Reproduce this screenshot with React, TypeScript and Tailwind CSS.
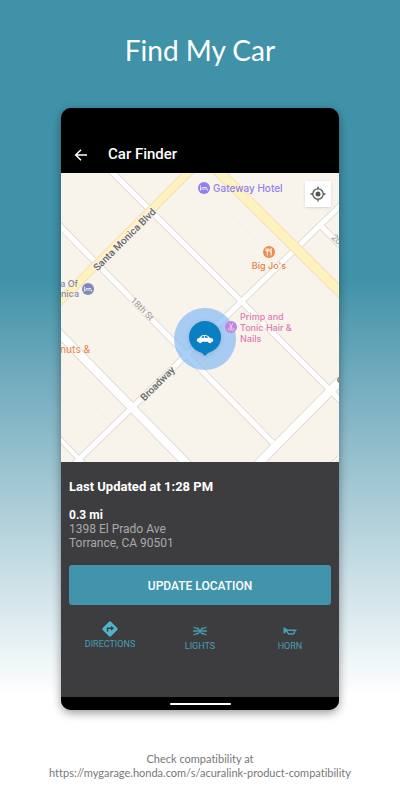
import React from "react";

const whiteRoads = [
  { d: "M108 168 L343 403", w: 5 },
  { d: "M57 223 L273 443", w: 5 },
  { d: "M57 436 L84 464", w: 4 },
  { d: "M72 466 L343 203", w: 5 },
  { d: "M319 224 L343 248", w: 5 },
  { d: "M326 468 L343 454", w: 2 },
  { d: "M56 330 L190 467", w: 8 },
  { d: "M254 468 L343 378", w: 8 },
];

const yellowRoads = [
  { d: "M193 168 L57 304", w: 7 },
  { d: "M214 167 L343 295", w: 9 },
];

function CarShape() {
  return (
    <path
      fillRule="evenodd"
      d="M-8 2.5 C-8.6 .2 -7.6 -1 -5.6 -1.3 C-4 -3.4 -2.8 -4 -.5 -4 C2.2 -4 3.4 -3 4.8 -1.2 C7.6 -.9 8.6 .2 8.2 2.4 L6.7 2.8 A2 2 0 0 1 2.9 2.8 L-2.8 2.8 A2 2 0 0 1 -6.6 2.8 Z M-4 -1.3 L-1 -1.3 L-1 -3.1 C-2.6 -3.1 -3.2 -2.5 -4 -1.3 Z M-.2 -1.3 L3.4 -1.3 C2.4 -2.7 1.6 -3.1 -.2 -3.1 Z"
      fill="#fff"
    />
  );
}

function BedShape() {
  return <path d="M-3.5 -2.5 V2.5 M-3.5 1 H3.5 V2.5 M-2 -.5 H3" stroke="#fff" strokeOpacity=".75" strokeWidth="1" fill="none" />;
}

function CarMap() {
  return (
    <svg viewBox="61 173 278 289" className="block w-full h-auto bg-[#f8f4ec]" role="img" aria-label="Car location map">
      {/* Parcel lines */}
      <g stroke="#f4efe7" strokeWidth="1">
        <path d="M130 248 L200 318 M180 200 L262 280 M76 290 L140 354 M240 345 L300 405 M66 380 L118 430 M215 200 L256 240 M160 420 L200 460 M215 412 L258 455" />
      </g>

      {/* Streets */}
      <g fill="none" stroke="#e0dcd7">
        {whiteRoads.map((r) => (
          <path key={r.d} d={r.d} strokeWidth={r.w + 2} />
        ))}
      </g>
      <g fill="none" stroke="#fff">
        {whiteRoads.map((r) => (
          <path key={r.d} d={r.d} strokeWidth={r.w} />
        ))}
      </g>
      <g fill="none" stroke="#f7dfb0">
        {yellowRoads.map((r) => (
          <path key={r.d} d={r.d} strokeWidth={r.w + 2} />
        ))}
      </g>
      <g fill="none" stroke="#fef3c0">
        {yellowRoads.map((r) => (
          <path key={r.d} d={r.d} strokeWidth={r.w} />
        ))}
      </g>

      {/* Street names */}
      <g className="font-['Roboto',sans-serif] text-[10px] font-medium" textAnchor="middle" stroke="#f8f4ec" strokeWidth="2" paintOrder="stroke">
        <text transform="translate(127 242) rotate(-45)" fill="#66666a">Santa Monica Blvd</text>
        <text transform="translate(160 386) rotate(-45)" fill="#66666a">Broadway</text>
        <text transform="translate(140 311) rotate(45)" className="text-[9px] font-normal" fill="#97979a">18th St</text>
        <text transform="translate(341 248) rotate(45)" className="text-[9px] font-normal" fill="#97979a">20th St</text>
        <text transform="translate(355 371) rotate(-45)" fill="#66666a">Colorado</text>
      </g>

      {/* Location halo */}
      <circle cx="205" cy="339" r="31" fill="#7db7f5" fillOpacity=".65" />

      {/* Places */}
      <g className="font-['Inter',sans-serif] text-[9px] font-medium">
        <g transform="translate(204 188)">
          <circle r="6" fill="#9180ee" />
          <BedShape />
        </g>
        <text x="213" y="192" className="text-[10px]" fill="#9180ee">Gateway Hotel</text>

        <circle cx="269" cy="252" r="6" fill="#f08c4b" />
        <path d="M266 248.5 V251 H268.6 V248.5 M267.3 248.5 V255.5 M271.2 255.5 V248.5 C270 249 269.8 250.5 270 252 H271.2" stroke="#fff" strokeWidth="1" fill="none" />
        <text x="269" y="269" textAnchor="middle" fill="#e5824b">Big Jo&apos;s</text>

        <circle cx="231" cy="327" r="6" fill="#c183dc" />
        <path d="M229.5 323 L231.5 328 M233 323 L230.5 328" stroke="#fff" strokeWidth=".8" opacity=".7" />
        <circle cx="229.5" cy="329.3" r="1.3" fill="none" stroke="#fff" strokeWidth=".7" opacity=".7" />
        <circle cx="232.7" cy="329.3" r="1.3" fill="none" stroke="#fff" strokeWidth=".7" opacity=".7" />
        <g fill="#dd7ab5" stroke="#f8f4ec" strokeWidth="2" paintOrder="stroke">
          <text x="240" y="320">Primp and</text>
          <text x="240" y="331">Tonic Hair &amp;</text>
          <text x="240" y="342">Nails</text>
        </g>

        <g transform="translate(88 289)">
          <circle r="6" fill="#8189b8" />
          <BedShape />
        </g>
        <g fill="#8189b0" textAnchor="end">
          <text x="78" y="287">Casa Of</text>
          <text x="79" y="297">Monica</text>
        </g>
        <text x="90" y="353" className="text-[10px]" textAnchor="end" fill="#e5905c">Donuts &amp;</text>
      </g>

      {/* Car marker */}
      <g className="drop-shadow-sm">
        <circle cx="205" cy="337" r="16" fill="#0a80c4" />
        <path d="M199 350 L205 356 L211 350 Z" fill="#0a80c4" />
        <g transform="translate(205 339)">
          <CarShape />
        </g>
      </g>
    </svg>
  );
}

function DirectionsIcon() {
  return (
    <svg viewBox="0 0 16 16" className="size-4" aria-hidden="true">
      <path d="M8 .3 Q8.6 .3 9 .7 L15.3 7 Q16 8 15.3 9 L9 15.3 Q8 16 7 15.3 L.7 9 Q0 8 .7 7 L7 .7 Q7.4 .3 8 .3 Z" fill="#4fb3cd" />
      <path d="M5.5 10.5 V7.3 H9.5" fill="none" stroke="#3d3d3f" strokeWidth="1.5" />
      <path d="M9 4.8 L12 7.3 L9 9.8 Z" fill="#3d3d3f" />
    </svg>
  );
}

function LightsIcon() {
  return (
    <svg viewBox="0 0 16 10" className="w-4 h-2.5" fill="none" stroke="#469fb6" strokeWidth="1.3" aria-hidden="true">
      <path d="M5 1.6 Q10 5 5 8.4 M11 1.6 Q6 5 11 8.4 M5.4 3 L1.5 1 M6.5 5 H1 M5.4 7 L1.5 9 M10.6 3 L14.5 1 M9.5 5 H15 M10.6 7 L14.5 9" />
    </svg>
  );
}

function HornIcon() {
  return (
    <svg viewBox="0 0 16 10" className="w-4 h-2.5" aria-hidden="true">
      <path d="M1.5 1 L5.5 3.4 H14.5 V5 H5.5 L1.5 8 Z" fill="#469fb6" />
      <path d="M5 4.6 Q5.6 8 7.5 8 H10.4 Q12.6 8 12.8 4.6" fill="none" stroke="#469fb6" strokeWidth="1.3" />
    </svg>
  );
}

export default function App() {
  return (
    <main className="min-h-screen bg-white bg-linear-to-b from-[#4092a9] from-35% to-white to-87% font-['Roboto',sans-serif]">
      <h1 className="pt-8 text-center font-['Lato',sans-serif] text-[28px] leading-9 text-white">Find My Car</h1>

      {/* Phone */}
      <section className="mx-[61px] mt-10 overflow-hidden rounded-[10px] bg-[#3d3d3f] shadow-[0_3px_10px_rgba(0,0,0,0.4)]">
        <header className="flex h-[65px] items-center gap-[19px] bg-black px-3 pt-7 text-white">
          <button type="button" aria-label="Back" className="flex size-4 items-center justify-center">
            <svg viewBox="0 0 16 16" className="size-4" fill="none" stroke="#fff" strokeWidth="1.5" aria-hidden="true">
              <path d="M14 8 H3 M8 2.7 L2.7 8 L8 13.3" />
            </svg>
          </button>
          <h2 className="text-[15px] font-medium">Car Finder</h2>
        </header>

        <div className="relative">
          <CarMap />
          <button type="button" aria-label="Center on my location" className="absolute top-2 right-2 flex size-[26px] items-center justify-center bg-white shadow-sm">
            <svg viewBox="0 0 16 16" className="size-4" fill="none" stroke="#555" strokeWidth="1.3" aria-hidden="true">
              <circle cx="8" cy="8" r="5.2" />
              <circle cx="8" cy="8" r="2.5" fill="#555" stroke="none" />
              <path d="M8 .5 V3 M8 13 V15.5 M.5 8 H3 M13 8 H15.5" />
            </svg>
          </button>
        </div>

        <div className="px-2 pt-4">
          <h3 className="text-[13px] leading-[18px] font-bold text-white">Last Updated at 1:28 PM</h3>
          <p className="mt-3 text-xs leading-[14px] font-bold text-white">0.3 mi</p>
          <address className="text-xs leading-[14px] text-[#a9a9ab] not-italic">
            1398 El Prado Ave
            <br />
            Torrance, CA 90501
          </address>
          <button type="button" className="mt-[15px] h-10 w-full rounded-[3px] bg-[#4294ac] pt-0.5 text-xs font-medium text-white">
            UPDATE LOCATION
          </button>
        </div>

        <div className="grid h-[92px] grid-cols-3 items-start px-1 pt-4 text-[9px] leading-3 text-[#469fb6]">
          <button type="button" className="flex flex-col items-center gap-[1px]">
            <DirectionsIcon />
            DIRECTIONS
          </button>
          <button type="button" className="flex flex-col items-center gap-1 pt-[5px]">
            <LightsIcon />
            LIGHTS
          </button>
          <button type="button" className="flex flex-col items-center gap-1 pt-[5px]">
            <HornIcon />
            HORN
          </button>
        </div>

        <div className="flex h-[13px] items-center justify-center bg-black">
          <span className="h-0.5 w-[61px] rounded-full bg-white" />
        </div>
      </section>

      <footer className="pt-[42px] pb-5 text-center font-['Lato',sans-serif] text-[11px] leading-[14px] text-[#77777a] [font-variant-ligatures:none]">
        <p>Check compatibility at</p>
        <a href="https://mygarage.honda.com/s/acuralink-product-compatibility">
          https://mygarage.honda.com/s/acuralink-product-compatibility
        </a>
      </footer>
    </main>
  );
}
